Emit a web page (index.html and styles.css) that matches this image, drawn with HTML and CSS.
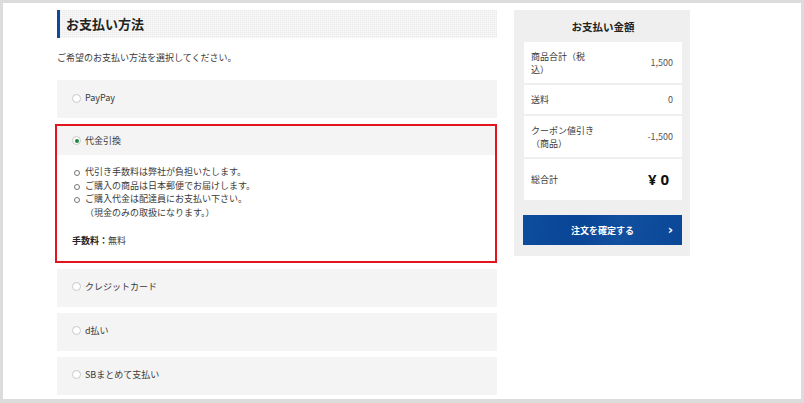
FILE: index.html
```html
<!DOCTYPE html>
<html lang="ja">
<head>
<meta charset="utf-8">
<title>お支払い方法</title>
<link rel="stylesheet" href="styles.css">
</head>
<body>
<div class="frame">
  <main class="main">
    <h2 class="sec-title">お支払い方法</h2>
    <p class="lead">ご希望のお支払い方法を選択してください。</p>

    <div class="opt"><span class="radio"></span>PayPay</div>

    <div class="opt-sel">
      <div class="opt-sel-head"><span class="radio on"></span>代金引換</div>
      <div class="opt-sel-body">
        <ul class="notes">
          <li>代引き手数料は弊社が負担いたします。</li>
          <li>ご購入の商品は日本郵便でお届けします。</li>
          <li>ご購入代金は配達員にお支払い下さい。<br>（現金のみの取扱になります。）</li>
        </ul>
        <p class="fee"><b>手数料：</b>無料</p>
      </div>
    </div>

    <div class="opt"><span class="radio"></span>クレジットカード</div>
    <div class="opt"><span class="radio"></span>d払い</div>
    <div class="opt"><span class="radio"></span>SBまとめて支払い</div>
  </main>

  <aside class="summary">
    <h3 class="sum-title">お支払い金額</h3>
    <div class="card tall"><span class="lbl">商品合計（税<br>込）</span><span class="val">1,500</span></div>
    <div class="card"><span class="lbl">送料</span><span class="val">0</span></div>
    <div class="card tall"><span class="lbl">クーポン値引き<br>（商品）</span><span class="val">-1,500</span></div>
    <div class="card total"><span class="lbl">総合計</span><span class="val big">¥ 0</span></div>
    <button class="btn" type="button"><span class="btn-text">注文を確定する</span><span class="chev">›</span></button>
  </aside>
</div>
</body>
</html>
```

FILE: styles.css
```css
* { box-sizing: border-box; }
html, body { margin: 0; padding: 0; background: #fff; }
body {
  font-family: "Noto Sans CJK JP", "Noto Sans", sans-serif;
  color: #3a3a3a;
  font-size: 9px;
}
.frame {
  width: 804px;
  height: 403px;
  border: 3px solid #dcdcdc;
  border-bottom-width: 4px;
  display: flex;
  gap: 17px;
  padding: 7px 0 0 54px;
  overflow: hidden;
  background: #fff;
}
.main { width: 440px; flex: none; }
.sec-title {
  margin: 0;
  height: 28px;
  line-height: 28px;
  padding-left: 6px;
  border-left: 3px solid #0f4a98;
  font-size: 13px;
  font-weight: 700;
  color: #222;
  background-color: #fafafa;
  background-image:
    linear-gradient(90deg, rgba(0,0,0,0.028) 1px, transparent 1px),
    linear-gradient(rgba(0,0,0,0.028) 1px, transparent 1px);
  background-size: 2px 2px;
}
.lead {
  margin: 13px 0 15px;
  line-height: 14px;
}
.opt {
  height: 38px;
  background: #f4f4f4;
  padding: 11px 0 13px 15px;
  line-height: 14px;
  margin-bottom: 6px;
  display: flex;
  align-items: center;
}
.opt:first-of-type { margin-bottom: 8px; }
.radio {
  display: inline-block;
  width: 9px;
  height: 9px;
  border-radius: 50%;
  border: 1px solid #c8c8c8;
  background: #fff;
  margin-right: 4px;
  flex: none;
  position: relative;
}
.radio.on::after {
  content: "";
  position: absolute;
  left: 1.5px;
  top: 1.5px;
  width: 4px;
  height: 4px;
  border-radius: 50%;
  background: #1d8a3f;
}
.opt-sel {
  width: 438px;
  outline: 2px solid #e2151e;
  margin-bottom: 8px;
}
.opt-sel-head {
  height: 29px;
  background: #f4f4f4;
  padding-left: 15px;
  display: flex;
  align-items: center;
  line-height: 14px;
}
.opt-sel-body {
  background: #fff;
  padding: 10px 0 13px 15px;
}
.notes {
  list-style: none;
  margin: 0;
  padding: 0 0 0 13px;
  line-height: 13.7px;
}
.notes li { position: relative; }
.notes li::before {
  content: "";
  position: absolute;
  left: -11px;
  top: 5px;
  width: 4px;
  height: 4px;
  border: 1px solid #777;
  border-radius: 50%;
}
.fee {
  margin: 14px 0 0;
  line-height: 14px;
}
.fee b { color: #222; }

.summary {
  width: 176px;
  flex: none;
  align-self: flex-start;
  background: #efefef;
  padding: 0 8px 11px 10px;
}
.sum-title {
  margin: 0;
  padding: 10px 0 8px;
  line-height: 14px;
  font-size: 10.5px;
  font-weight: 700;
  text-align: center;
  color: #222;
}
.card {
  background: #fff;
  height: 29px;
  margin-bottom: 2px;
  display: flex;
  align-items: center;
  justify-content: space-between;
  padding: 0 9px 0 7px;
  line-height: 13px;
}
.card.tall { height: 41px; }
.card.total { height: 41px; margin-top: 1px; margin-bottom: 0; padding-right: 13px; }
.val { color: #555; }
.val.big { font-size: 15px; font-weight: 700; color: #111; font-family: "Noto Sans", "Noto Sans CJK JP", sans-serif; }
.btn {
  margin: 15px 0 0 -1px;
  width: 159px;
  height: 30px;
  border: 0;
  padding: 0;
  display: flex;
  align-items: center;
  justify-content: center;
  position: relative;
  background: linear-gradient(100deg, #0e4c9e 0%, #0a4596 35%, #114f9f 60%, #0b4797 100%);
  color: #fff;
  font-family: "Noto Sans CJK JP", sans-serif;
  font-size: 9px;
  font-weight: 700;
}
.chev {
  position: absolute;
  right: 9px;
  top: 50%;
  transform: translateY(-55%);
  font-size: 13px;
  font-weight: 700;
  font-family: "DejaVu Sans", sans-serif;
}
```
